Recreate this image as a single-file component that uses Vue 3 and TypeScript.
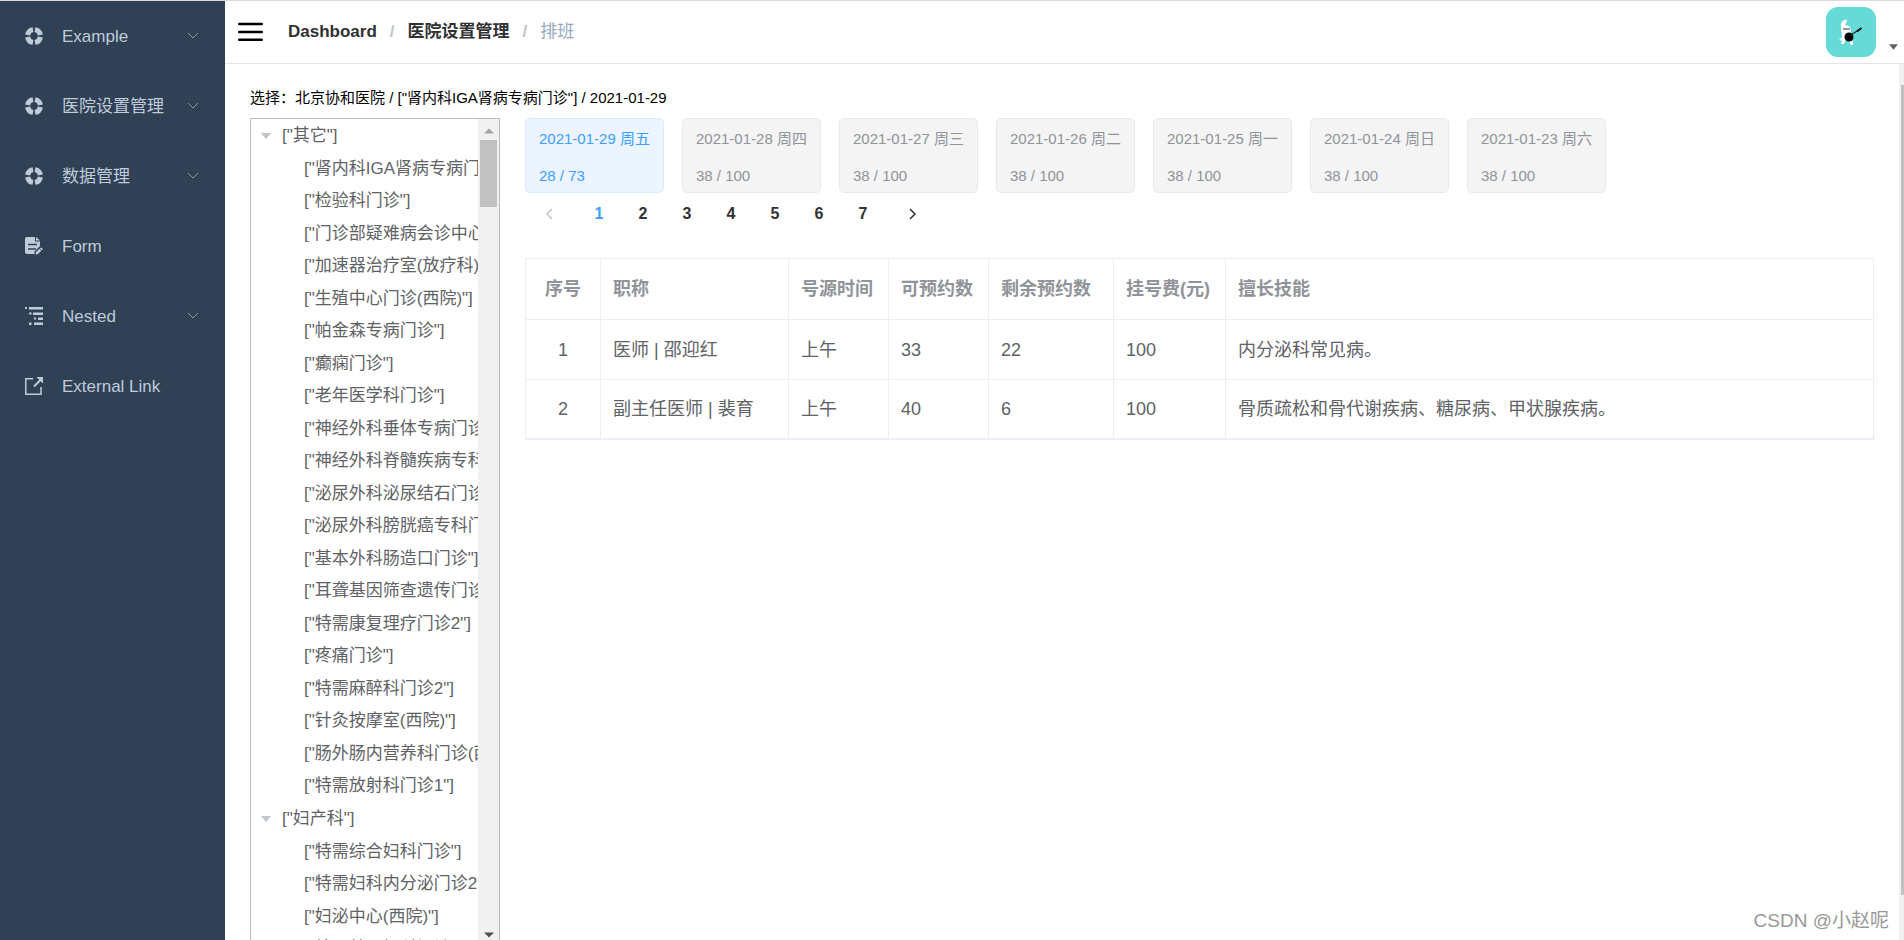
<script setup lang="ts">
import { ref } from 'vue'

interface MenuItem { label: string; icon: 'example' | 'form' | 'nested' | 'link'; expandable: boolean }
interface TreeGroup { label: string; children: string[] }
interface Doctor { title: string; time: string; total: number; left: number; fee: number; skill: string }

const menu: MenuItem[] = [
  { label: 'Example', icon: 'example', expandable: true },
  { label: '医院设置管理', icon: 'example', expandable: true },
  { label: '数据管理', icon: 'example', expandable: true },
  { label: 'Form', icon: 'form', expandable: false },
  { label: 'Nested', icon: 'nested', expandable: true },
  { label: 'External Link', icon: 'link', expandable: false },
]

const tree: TreeGroup[] = [
  {
    label: '["其它"]',
    children: [
      '肾内科IGA肾病专病门诊', '检验科门诊', '门诊部疑难病会诊中心', '加速器治疗室(放疗科)', '生殖中心门诊(西院)',
      '帕金森专病门诊', '癫痫门诊', '老年医学科门诊', '神经外科垂体专病门诊', '神经外科脊髓疾病专科门诊',
      '泌尿外科泌尿结石门诊', '泌尿外科膀胱癌专科门诊', '基本外科肠造口门诊', '耳聋基因筛查遗传门诊', '特需康复理疗门诊2',
      '疼痛门诊', '特需麻醉科门诊2', '针灸按摩室(西院)', '肠外肠内营养科门诊(西院)', '特需放射科门诊1',
    ].map((name) => `["${name}"]`),
  },
  {
    label: '["妇产科"]',
    children: ['特需综合妇科门诊', '特需妇科内分泌门诊2', '妇泌中心(西院)', '特需普通妇科门诊'].map((name) => `["${name}"]`),
  },
]

const days = [
  { date: '2021-01-29 周五', count: '28 / 73' },
  { date: '2021-01-28 周四', count: '38 / 100' },
  { date: '2021-01-27 周三', count: '38 / 100' },
  { date: '2021-01-26 周二', count: '38 / 100' },
  { date: '2021-01-25 周一', count: '38 / 100' },
  { date: '2021-01-24 周日', count: '38 / 100' },
  { date: '2021-01-23 周六', count: '38 / 100' },
]

const columns = ['序号', '职称', '号源时间', '可预约数', '剩余预约数', '挂号费(元)', '擅长技能']
const doctors: Doctor[] = [
  { title: '医师 | 邵迎红', time: '上午', total: 33, left: 22, fee: 100, skill: '内分泌科常见病。' },
  { title: '副主任医师 | 裴育', time: '上午', total: 40, left: 6, fee: 100, skill: '骨质疏松和骨代谢疾病、糖尿病、甲状腺疾病。' },
]

const activeDay = ref(0)
const page = ref(1)
</script>

<template>
  <div class="app">
    <nav class="sidebar">
      <a v-for="item in menu" :key="item.label" href="#" class="menu-item">
        <svg class="menu-icon" viewBox="0 0 18 18" aria-hidden="true">
          <g v-if="item.icon === 'example'" fill="none" stroke="currentColor" stroke-width="5">
            <path d="M10 2.6A6.5 6.5 0 0 1 15.4 8M15.4 10A6.5 6.5 0 0 1 10 15.4M8 15.4A6.5 6.5 0 0 1 2.6 10M2.6 8A6.5 6.5 0 0 1 8 2.6" />
          </g>
          <g v-else-if="item.icon === 'form'">
            <path fill="currentColor" d="M2 0H10V4.500H15V9L9.500 14.500V17H2Q0 17 0 15V2Q0 0 2 0ZM11 0L15 3.500H11Z" />
            <path stroke="#304156" stroke-width="1.400" d="M3 7.500H12M3 12H11" />
            <path fill="currentColor" d="M10.500 17.500L11 15L16 10.500L18 12L13 17Z" />
            <path stroke="#304156" stroke-width=".8" d="M14.500 11.500L16.500 13.500" />
          </g>
          <path v-else-if="item.icon === 'nested'" fill="currentColor" d="M0 0H2V2H0ZM4 0H18V2.500H4ZM4 5.500H6.500V7.500H4ZM8 5.500H18V8H8ZM9 10.500H11V12.500H9ZM13 10.500H18V13H13ZM4 15.500H6.500V18H4ZM9 15.500H18V18H9Z" />
          <g v-else fill="none" stroke="currentColor" stroke-width="1.500">
            <path d="M8 1.800H.8V17.200H16V10" />
            <path d="M9 9.500L16 2.500" stroke-width="2" />
            <path d="M11.500 0H18V6.500Z" fill="currentColor" stroke="none" />
          </g>
        </svg>
        <span class="menu-label">{{ item.label }}</span>
        <svg v-if="item.expandable" class="menu-arrow" viewBox="0 0 12 8" aria-hidden="true">
          <path d="M1 1L6 6L11 1" fill="none" stroke="#909399" />
        </svg>
      </a>
    </nav>

    <div class="main">
      <header class="navbar">
        <button class="hamburger" type="button" aria-label="Toggle sidebar">
          <svg viewBox="0 0 25 20" aria-hidden="true">
            <path d="M1.300 2H23.700M1.300 10H23.700M1.300 17.700H23.700" stroke="#000" stroke-width="2.600" stroke-linecap="round" />
          </svg>
        </button>
        <nav class="breadcrumb" aria-label="Breadcrumb">
          <a href="#">Dashboard</a><i>/</i><a href="#">医院设置管理</a><i>/</i><span>排班</span>
        </nav>
        <button class="user" type="button" aria-label="User menu">
          <svg class="avatar" viewBox="0 0 50 50" aria-hidden="true">
            <rect width="50" height="50" rx="12" fill="#65dad7" />
            <path fill="#fff" d="M15 21Q14 15 18 13Q21 12 21 14L19 18L23 19L25 22L25 28L27 35L27 38H25L23 34H19L18 37H15L16 34L13 33L16 30Z" />
            <path d="M17 22H24" stroke="#333" stroke-width="1" />
            <circle cx="23" cy="30" r="4.500" fill="#050505" />
            <path d="M25 28L34 22" stroke="#222" stroke-width="1.200" />
            <path d="M31 24.500L35.500 21" stroke="#222" stroke-width="2.200" />
          </svg>
          <svg class="caret" viewBox="0 0 10 6" aria-hidden="true"><path d="M0 0H10L5 6Z" fill="#606266" /></svg>
        </button>
      </header>

      <div class="body">
        <main class="content">
          <p class="selection">选择：北京协和医院 / ["肾内科IGA肾病专病门诊"] / 2021-01-29</p>
          <div class="columns">
            <aside class="tree-box">
              <ul class="tree">
                <li v-for="group in tree" :key="group.label">
                  <div class="node group">
                    <svg class="expand" viewBox="0 0 10 6" aria-hidden="true"><path d="M0 0H10L5 6Z" fill="#c0c4cc" /></svg>
                    <span>{{ group.label }}</span>
                  </div>
                  <ul>
                    <li v-for="child in group.children" :key="child" class="node leaf">{{ child }}</li>
                  </ul>
                </li>
              </ul>
              <div class="tree-scroll" aria-hidden="true">
                <svg viewBox="0 0 10 6"><path d="M0 5.500H10L5 .5Z" fill="#a3a3a3" /></svg>
                <span class="tree-thumb"></span>
                <svg viewBox="0 0 10 6"><path d="M0 .5H10L5 5.500Z" fill="#505050" /></svg>
              </div>
            </aside>

            <section class="schedule">
              <div class="days">
                <button
                  v-for="(day, index) in days"
                  :key="day.date"
                  type="button"
                  class="day"
                  :class="{ active: index === activeDay }"
                  @click="activeDay = index"
                >
                  <span>{{ day.date }}</span>
                  <span>{{ day.count }}</span>
                </button>
              </div>

              <nav class="pager" aria-label="Pagination">
                <button type="button" class="step" disabled aria-label="Previous page">
                  <svg viewBox="0 0 8 14" aria-hidden="true"><path d="M7 2L2 7L7 12" /></svg>
                </button>
                <button v-for="n in 7" :key="n" type="button" :class="{ current: n === page }" @click="page = n">{{ n }}</button>
                <button type="button" class="step next" aria-label="Next page">
                  <svg viewBox="0 0 8 14" aria-hidden="true"><path d="M1 2L6 7L1 12" /></svg>
                </button>
              </nav>

              <table class="doctors">
                <colgroup>
                  <col class="c-index" /><col class="c-title" /><col class="c-time" /><col class="c-time" />
                  <col class="c-left" /><col class="c-fee" /><col />
                </colgroup>
                <thead>
                  <tr><th v-for="column in columns" :key="column" scope="col">{{ column }}</th></tr>
                </thead>
                <tbody>
                  <tr v-for="(doctor, index) in doctors" :key="doctor.title">
                    <td>{{ index + 1 }}</td>
                    <td>{{ doctor.title }}</td>
                    <td>{{ doctor.time }}</td>
                    <td>{{ doctor.total }}</td>
                    <td>{{ doctor.left }}</td>
                    <td>{{ doctor.fee }}</td>
                    <td>{{ doctor.skill }}</td>
                  </tr>
                </tbody>
              </table>
            </section>
          </div>
        </main>
        <div class="page-scroll" aria-hidden="true"><span class="page-thumb"></span></div>
      </div>
    </div>
    <div class="watermark">CSDN @小赵呢</div>
  </div>
</template>

<style>
html,
body {
  margin: 0;
  overflow: hidden;
}
</style>

<style scoped>
.app {
  position: relative;
  display: flex;
  box-sizing: border-box;
  height: 100vh;
  border-top: 1px solid #dcdcdc;
  overflow: hidden;
  background: #fff;
  color: #000;
  font-family: "Liberation Sans", "Noto Sans CJK SC", sans-serif;
  font-size: 15px;
}

button {
  padding: 0;
  border: 0;
  background: none;
  font: inherit;
  cursor: pointer;
}

a {
  color: inherit;
  text-decoration: none;
}

ul {
  margin: 0;
  padding: 0;
  list-style: none;
}

svg {
  display: block;
  flex: none;
}

/* Sidebar */
.sidebar {
  flex: none;
  width: 225px;
  background: #304156;
}

.menu-item {
  display: flex;
  align-items: center;
  height: 70px;
  padding: 0 26px 0 25px;
  color: #bfcbd9;
  font-size: 17px;
  line-height: 25px;
}

.menu-icon {
  width: 18px;
  height: 18px;
  margin-right: 19px;
}

.menu-label {
  flex: 1;
  white-space: nowrap;
}

.menu-arrow {
  width: 12px;
  height: 8px;
}

/* Top bar */
.main {
  display: flex;
  flex: 1;
  flex-direction: column;
  min-width: 0;
}

.navbar {
  display: flex;
  flex: none;
  align-items: center;
  height: 62px;
  border-bottom: 1px solid #e4e4e4;
}

.hamburger {
  margin: 0 25px 0 13px;
}

.hamburger svg {
  width: 25px;
  height: 20px;
}

.breadcrumb {
  display: flex;
  flex: 1;
  color: #97a8be;
  font-size: 17px;
  line-height: 24px;
}

.breadcrumb a {
  color: #303133;
  font-weight: 700;
}

.breadcrumb i {
  margin: 0 13px;
  color: #c0c4cc;
  font-style: normal;
  font-weight: 700;
}

.user {
  display: flex;
  align-items: flex-end;
  gap: 13px;
  margin-right: 6px;
}

.avatar {
  width: 50px;
  height: 50px;
}

.caret {
  width: 9px;
  height: 6px;
  margin-bottom: 7px;
}

/* Page body */
.body {
  display: flex;
  flex: 1;
  min-height: 0;
}

.content {
  display: flex;
  flex: 1;
  flex-direction: column;
  min-width: 0;
  padding: 22px 25px 0;
}

.page-scroll {
  display: flex;
  box-sizing: border-box;
  width: 5px;
  padding: 21px 0 45px 2px;
  background: #f1f1f1;
}

.page-thumb {
  flex: 1;
  background: #c1c1c1;
}

.selection {
  margin: 0 0 9px;
  line-height: 23px;
}

.columns {
  display: flex;
  flex: 1;
  gap: 25px;
  min-height: 0;
}

/* Department tree */
.tree-box {
  display: flex;
  box-sizing: border-box;
  flex: none;
  width: 250px;
  border: 1px solid #bbb;
  border-bottom: 0;
  overflow: hidden;
}

.tree {
  flex: 1;
  min-width: 0;
  overflow: hidden;
  color: #606266;
  font-size: 17px;
}

.node {
  height: 33px;
  line-height: 33px;
  white-space: nowrap;
}

.group {
  display: flex;
  align-items: center;
  padding-left: 10px;
}

.expand {
  width: 10px;
  height: 6px;
  margin-right: 11px;
}

.leaf {
  padding-left: 53px;
}

.leaf:nth-child(odd) {
  height: 32px;
}

.tree-scroll {
  display: flex;
  flex: none;
  flex-direction: column;
  align-items: center;
  width: 21px;
  padding: 9px 0 2px;
  box-sizing: border-box;
  background: #f1f1f1;
}

.tree-scroll svg {
  width: 10px;
  height: 6px;
}

.tree-thumb {
  width: 17px;
  height: 67px;
  margin: 6px 0 auto;
  background: #c1c1c1;
}

/* Schedule */
.schedule {
  flex: 1;
  min-width: 0;
}

.days {
  display: flex;
  gap: 18px;
}

.day {
  display: flex;
  box-sizing: border-box;
  flex-direction: column;
  width: 139px;
  height: 75px;
  padding: 1px 13px;
  border: 1px solid #e9e9eb;
  border-radius: 5px;
  background: #f4f4f5;
  color: #909399;
  line-height: 37px;
  text-align: left;
  white-space: nowrap;
}

.day.active {
  border-color: #d9ecff;
  background: #ecf5ff;
  color: #409eff;
}

.pager {
  display: flex;
  align-items: center;
  height: 41px;
  padding-left: 6px;
  color: #303133;
  font-size: 16px;
  font-weight: 700;
}

.pager button {
  width: 44px;
  color: inherit;
}

.pager .current {
  color: #409eff;
}

.pager .step {
  display: flex;
  justify-content: center;
  width: 36px;
  margin-right: 10px;
}

.pager .next {
  margin: 0 0 0 10px;
}

.step svg {
  width: 8px;
  height: 14px;
  fill: none;
  stroke: #303133;
  stroke-width: 1.5;
}

.step:disabled svg {
  stroke: #c0c4cc;
}

.doctors {
  width: 100%;
  margin-top: 24px;
  border: 1px solid #ebeef5;
  border-bottom-width: 2px;
  border-spacing: 0;
  table-layout: fixed;
  color: #606266;
  font-size: 18px;
  line-height: 26px;
}

.doctors th,
.doctors td {
  box-sizing: border-box;
  height: 60px;
  padding: 0 12px;
  border-right: 1px solid #ebeef5;
  border-bottom: 1px solid #ebeef5;
  text-align: left;
}

.doctors th {
  height: 61px;
  color: #909399;
}

.doctors th:first-child,
.doctors td:first-child {
  text-align: center;
}

.doctors th:last-child,
.doctors td:last-child {
  border-right: 0;
}

.doctors tr:last-child td {
  height: 58px;
  border-bottom: 0;
}

.c-index { width: 75px; }
.c-title { width: 188px; }
.c-time { width: 100px; }
.c-left { width: 125px; }
.c-fee { width: 112px; }

.watermark {
  position: absolute;
  right: 15px;
  bottom: 6px;
  color: #999;
  font-size: 19px;
  line-height: 26px;
  text-shadow: -1px -1px 0 #fff;
}
</style>
